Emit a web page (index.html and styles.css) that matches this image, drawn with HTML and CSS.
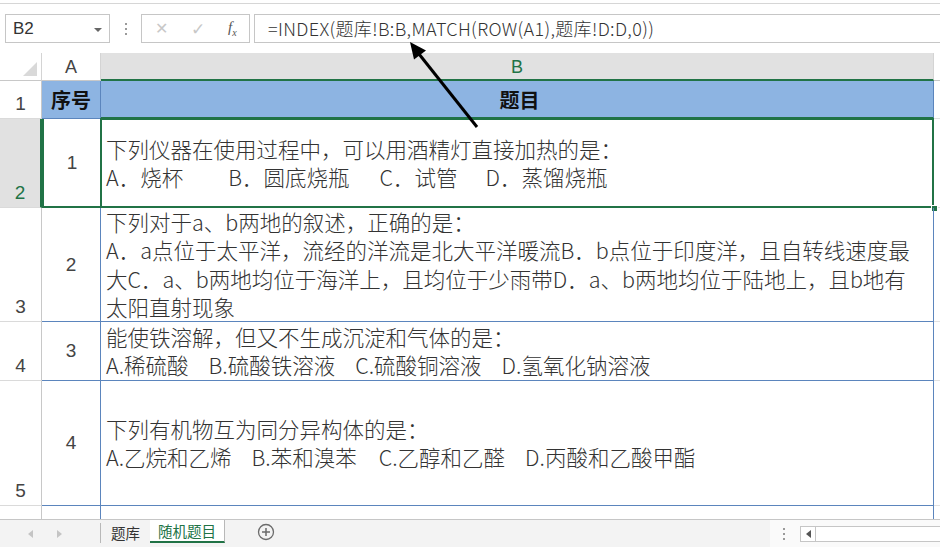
FILE: index.html
```html
<!DOCTYPE html>
<html lang="zh-CN">
<head>
<meta charset="utf-8">
<title>随机题目</title>
<link rel="stylesheet" href="styles.css">
</head>
<body>
<div class="app">
  <div class="topline"></div>
  <div class="formula-row">
    <div class="namebox"><span class="name">B2</span><span class="dd"></span></div>
    <div class="vdots"><i></i><i></i><i></i></div>
    <div class="fxbox">
      <span class="fx-x">✕</span>
      <span class="fx-ok">✓</span>
      <span class="fx-f">f<sub>x</sub></span>
    </div>
    <div class="formula">=INDEX(题库!B:B,MATCH(ROW(A1),题库!D:D,0))</div>
  </div>

  <div class="sheet">
    <div class="corner"><span class="tri"></span></div>
    <div class="colhead">A</div>
    <div class="colhead sel">B</div>
    <div class="colhead extra"></div>

    <div class="rowhead">1</div>
    <div class="cell a head">序号</div>
    <div class="cell b head center">题目</div>
    <div class="cell x"></div>

    <div class="rowhead sel">2</div>
    <div class="cell a boxed">1</div>
    <div class="cell b active"><div class="txt">下列仪器在使用过程中，可以用酒精灯直接加热的是：<br>A．烧杯<span class="g45"></span>B．圆底烧瓶<span class="g30"></span>C．试管<span class="g28"></span>D．蒸馏烧瓶</div><span class="selbox"></span><span class="handle"></span></div>
    <div class="cell x"></div>

    <div class="rowhead">3</div>
    <div class="cell a">2</div>
    <div class="cell b"><div class="txt">下列对于a、b两地的叙述，正确的是：<br>A．a点位于太平洋，流经的洋流是北大平洋暖流B．b点位于印度洋，且自转线速度最<br>大C．a、b两地均位于海洋上，且均位于少雨带D．a、b两地均位于陆地上，且b地有<br>太阳直射现象</div></div>
    <div class="cell x"></div>

    <div class="rowhead">4</div>
    <div class="cell a">3</div>
    <div class="cell b"><div class="txt">能使铁溶解，但又不生成沉淀和气体的是：<br>A.稀硫酸<span class="g20"></span>B.硫酸铁溶液<span class="g20"></span>C.硫酸铜溶液<span class="g20"></span>D.氢氧化钠溶液</div></div>
    <div class="cell x"></div>

    <div class="rowhead">5</div>
    <div class="cell a">4</div>
    <div class="cell b"><div class="txt">下列有机物互为同分异构体的是：<br>A.乙烷和乙烯<span class="g20"></span>B.苯和溴苯<span class="g22"></span>C.乙醇和乙醛<span class="g20"></span>D.丙酸和乙酸甲酯</div></div>
    <div class="cell x"></div>

    <div class="rowhead last"></div>
    <div class="cell a last"></div>
    <div class="cell b last"></div>
    <div class="cell x last"></div>
  </div>

  <div class="tabbar">
    <div class="nav"><span class="tl"></span><span class="tr"></span></div>
    <div class="tab">题库</div>
    <div class="tab on">随机题目</div>
    <div class="add"><svg width="18" height="18" viewBox="0 0 18 18"><circle cx="9" cy="9" r="7.5" fill="none" stroke="#6b6b6b" stroke-width="1.3"/><path d="M9 5v8M5 9h8" stroke="#6b6b6b" stroke-width="1.5"/></svg></div>
    <div class="spacer"></div>
    <div class="hscroll">
      <div class="vdots small"><i></i><i></i><i></i></div>
      <div class="sbtn"><span class="tl dark"></span></div>
      <div class="strack"></div>
    </div>
  </div>
</div>
<svg class="arrow" width="940" height="547" viewBox="0 0 940 547">
  <line x1="477" y1="127" x2="419" y2="54" stroke="#000" stroke-width="3"/>
  <polygon points="410,42 426,50.5 414,59.5" fill="#000"/>
</svg>
</body>
</html>
```

FILE: styles.css
```css
* { box-sizing: border-box; }
html, body { margin: 0; padding: 0; background: #fff; }
body { width: 940px; height: 547px; overflow: hidden; position: relative; font-family: "Noto Sans CJK SC", "Noto Sans", sans-serif; color: #333; }
.app { width: 940px; height: 547px; display: flex; flex-direction: column; }
.app > * { flex-shrink: 0; }

.topline { height: 4px; border-bottom: 1px solid #d6d6d6; }
.formula-row { height: 49px; display: flex; align-items: flex-start; padding-top: 10px; }
.namebox { width: 105px; height: 29px; margin-left: 5px; border: 1px solid #c6c6c6; display: flex; align-items: center; justify-content: space-between; padding: 0 7px; }
.name { font-family: "Liberation Sans", sans-serif; font-size: 17px; color: #333; }
.dd { width: 0; height: 0; border-left: 4px solid transparent; border-right: 4px solid transparent; border-top: 4px solid #666; margin-top: 2px; }
.vdots { width: 31px; height: 29px; display: flex; flex-direction: column; align-items: center; justify-content: center; gap: 3px; }
.vdots i { width: 2px; height: 2px; background: #9a9a9a; display: block; }
.fxbox { width: 109px; height: 29px; border: 1px solid #c6c6c6; display: flex; align-items: center; padding-left: 13px; }
.fx-x { color: #c8c8c8; font-size: 16px; width: 36px; font-family: "DejaVu Sans", sans-serif; }
.fx-ok { color: #c8c8c8; font-size: 17px; width: 37px; font-family: "DejaVu Sans", sans-serif; }
.fx-f { font-family: "Liberation Serif", serif; font-style: italic; font-size: 15px; color: #555; }
.fx-f sub { font-size: 10px; }
.formula { flex: 1; height: 29px; margin-left: 4px; border: 1px solid #c6c6c6; border-right: none; font-size: 18px; letter-spacing: 0.35px; line-height: 27px; padding-left: 13px; color: #333; white-space: nowrap; font-weight: 300; }

.sheet { display: grid; grid-template-columns: 42px 59px 833px 6px; grid-template-rows: 28px 38px 89px 114px 59px 125px 13px; }
.corner { border-right: 1px solid #d4d4d4; border-bottom: 1px solid #c8c8c8; position: relative; }
.tri { position: absolute; right: 4px; bottom: 4px; width: 0; height: 0; border-left: 14px solid transparent; border-bottom: 14px solid #d9d9d9; }
.colhead { display: flex; align-items: center; justify-content: center; font-family: "Liberation Sans", sans-serif; font-size: 18px; color: #444; border-right: 1px solid #d4d4d4; border-bottom: 1px solid #c8c8c8; padding-top: 2px; }
.colhead.sel { background: #e1e1e1; color: #217346; border-bottom: 2px solid #217346; }
.colhead.extra { border-right: none; }

.rowhead { display: flex; align-items: flex-end; justify-content: center; font-family: "Liberation Sans", sans-serif; font-size: 19px; color: #444; border-right: 1px solid #c8c8c8; border-bottom: 1px solid #dadada; padding-bottom: 3px; }
.rowhead.sel { background: #e1e1e1; color: #217346; border-right: 2px solid #217346; }
.rowhead.last { border-bottom: none; }

.cell { border-right: 1px solid #5b85bd; border-bottom: 1px solid #5b85bd; display: flex; align-items: center; font-size: 21.5px; color: #333; font-weight: 300; }
.cell.a { justify-content: center; font-family: "Liberation Sans", "Noto Sans CJK SC", sans-serif; font-size: 19px; color: #444; font-weight: normal; }
.cell.head { background: #8db4e2; font-family: "Noto Sans CJK SC", sans-serif; font-weight: bold; font-size: 20px; color: #111; }
.cell.b.head { border-bottom: 2px solid #217346; }
.cell.center { justify-content: center; }
.cell.boxed { border-bottom: 2px solid #217346; border-left: 2px solid #217346; }
.cell.b { position: relative; padding-left: 5px; }
.cell.x { border-right: none; border-bottom: 1px solid #e2e2e2; }
.cell.last { border-bottom: none; }
.txt { white-space: nowrap; line-height: 28.5px; }
.selbox { position: absolute; left: -1px; top: -1px; right: -1px; bottom: -1px; border: 2px solid #217346; pointer-events: none; }
.handle { position: absolute; right: -5px; bottom: -5px; width: 7px; height: 7px; background: #217346; border: 1px solid #fff; }

.g20 { display: inline-block; width: 20px; }
.g22 { display: inline-block; width: 22px; }
.g28 { display: inline-block; width: 28px; }
.g30 { display: inline-block; width: 30px; }
.g45 { display: inline-block; width: 45px; }

.tabbar { height: 28px; overflow: hidden; display: flex; align-items: stretch; background: #f3f3f3; border-top: 1px solid #c6c6c6; }
.nav { width: 100px; display: flex; align-items: center; padding-left: 28px; gap: 24px; }
.tl, .tr { width: 0; height: 0; border-top: 4px solid transparent; border-bottom: 4px solid transparent; }
.tl { border-right: 5px solid #c4c4c4; }
.tr { border-left: 5px solid #c4c4c4; }
.tl.dark { border-right-color: #555; }
.tab { display: flex; align-items: center; justify-content: center; font-size: 14.5px; line-height: 18px; color: #333; border-left: 1px solid #b8b8b8; margin: 3px 0 4px; width: 50px; }
.tab.on { width: 75px; margin: 0 0 4px; background: #fff; color: #217346; border-left: none; border-right: 1px solid #b8b8b8; border-bottom: 2px solid #217346; }
.add { width: 82px; display: flex; align-items: center; justify-content: center; padding-bottom: 3px; }
.spacer { flex: 1; }
.hscroll { width: 170px; background: #fafafa; display: flex; align-items: center; }
.vdots.small { width: 28px; height: 20px; gap: 3px; }
.sbtn { width: 16px; height: 16px; border: 1px solid #c6c6c6; background: #fff; display: flex; align-items: center; justify-content: center; margin-left: 2px; }
.strack { flex: 1; height: 16px; border-top: 1px solid #c6c6c6; border-bottom: 1px solid #c6c6c6; background: #fff; }

.arrow { position: absolute; left: 0; top: 0; pointer-events: none; }
```
